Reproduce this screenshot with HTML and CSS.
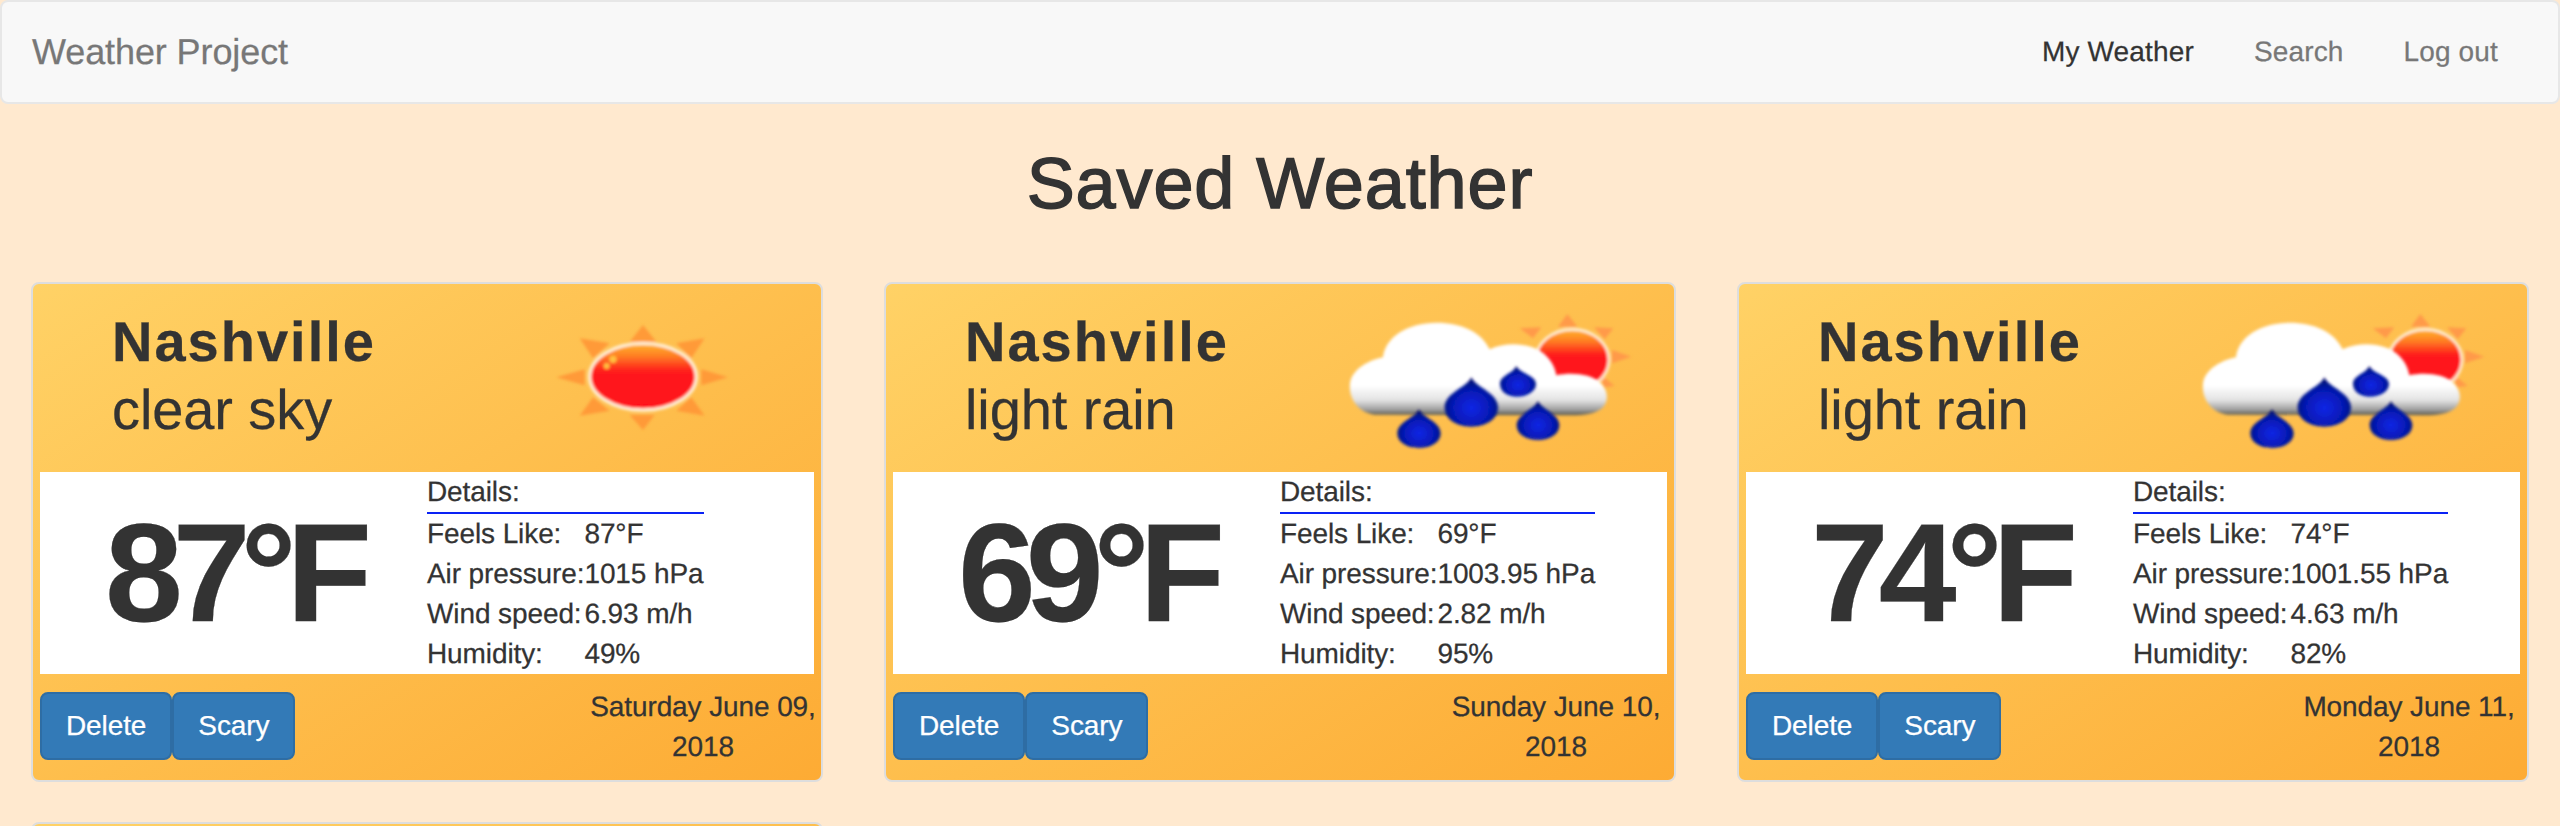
FILE: index.html
```html
<!DOCTYPE html>
<html lang="en">
<head>
<meta charset="utf-8">
<title>Weather Project</title>
<link rel="stylesheet" href="styles.css">
</head>
<body>
<svg class="defs" width="0" height="0" aria-hidden="true">
  <defs>
    <filter id="soft" x="-10%" y="-10%" width="120%" height="120%"><feGaussianBlur stdDeviation="4.5"/></filter>
    <linearGradient id="sunFill" x1="0" y1="0" x2="0" y2="1">
      <stop offset="0" stop-color="#ffb62e"/>
      <stop offset=".2" stop-color="#ff7a22"/>
      <stop offset=".42" stop-color="#ff1a1c"/>
      <stop offset="1" stop-color="#ff101a"/>
    </linearGradient>
    <linearGradient id="cloudFill" x1="0" y1="68" x2="0" y2="345" gradientUnits="userSpaceOnUse">
      <stop offset="0" stop-color="#ffffff"/>
      <stop offset=".68" stop-color="#ffffff"/>
      <stop offset=".84" stop-color="#e2e2e2"/>
      <stop offset=".94" stop-color="#a0a0a0"/>
      <stop offset="1" stop-color="#5a5a50"/>
    </linearGradient>
    <radialGradient id="dropFill" cx=".5" cy=".62" r=".6">
      <stop offset="0" stop-color="#0c26e6"/>
      <stop offset=".6" stop-color="#0619b4"/>
      <stop offset="1" stop-color="#020c66"/>
    </radialGradient>
    <symbol id="sun-icon" viewBox="0 0 900 480">
      <g transform="translate(129 0)" filter="url(#soft)">
        <g fill="#ff9a38">
          <polygon points="345,75 305,125 385,125"/>
          <polygon points="345,390 305,345 380,345"/>
          <polygon points="85,232 170,208 170,256"/>
          <polygon points="600,232 520,208 520,256"/>
          <polygon points="155,115 245,130 195,175"/>
          <polygon points="530,115 445,130 490,175"/>
          <polygon points="155,347 195,292 245,332"/>
          <polygon points="530,347 490,292 445,332"/>
        </g>
        <ellipse cx="345" cy="230" rx="160" ry="100" fill="url(#sunFill)" stroke="#fff0d8" stroke-width="10"/>
        <g fill="#ffc040">
          <circle cx="255" cy="178" r="11"/>
          <circle cx="236" cy="198" r="9"/>
        </g>
      </g>
    </symbol>
    <symbol id="rain-icon" viewBox="0 0 900 480">
      <g filter="url(#soft)">
        <g fill="#ff9a48">
          <polygon points="688,42 660,80 718,80"/>
          <polygon points="545,85 610,82 585,115"/>
          <polygon points="826,85 768,82 800,118"/>
          <polygon points="880,170 822,150 822,190"/>
          <polygon points="830,258 790,225 795,262"/>
        </g>
        <ellipse cx="703" cy="180" rx="110" ry="92" fill="url(#sunFill)" stroke="#fff0d8" stroke-width="8"/>
      </g>
      <path filter="url(#soft)" fill="url(#cloudFill)" d="M110 344 C60 338 32 295 36 252 C40 214 80 184 135 172 C142 110 210 68 295 68 C370 68 430 95 455 148 C510 122 590 130 625 168 C645 188 652 208 655 226 C700 216 760 222 785 247 C812 272 812 302 795 322 C775 342 740 346 700 346 Z"/>
      <g filter="url(#soft)" fill="url(#dropFill)">
        <path d="M400 232 C412 262 480 278 480 322 C480 360 442 380 400 380 C358 380 320 360 320 322 C320 278 388 262 400 232Z"/>
        <path d="M535 198 C545 220 594 226 594 252 C594 276 566 290 537 290 C508 290 486 276 486 252 C486 226 525 220 535 198Z"/>
        <path d="M243 328 C253 352 308 366 308 400 C308 428 277 444 243 444 C209 444 178 428 178 400 C178 366 233 352 243 328Z"/>
        <path d="M600 303 C610 327 664 343 664 375 C664 404 634 420 600 420 C566 420 536 404 536 375 C536 343 590 327 600 303Z"/>
      </g>
    </symbol>
  </defs>
</svg>

<nav class="navbar">
  <a class="brand" href="#">Weather Project</a>
  <ul class="nav-links">
    <li><a class="nav-link active" href="#">My Weather</a></li>
    <li><a class="nav-link" href="#">Search</a></li>
    <li><a class="nav-link" href="#">Log out</a></li>
  </ul>
</nav>

<h1 class="page-title">Saved Weather</h1>

<main class="cards">
  <article class="card">
    <header class="card-head">
      <div class="place">
        <div class="city">Nashville</div>
        <div class="sky">clear sky</div>
      </div>
      <svg class="weather-icon" role="img" aria-label="clear sky"><use href="#sun-icon"/></svg>
    </header>
    <section class="panel">
      <div class="temp">87°F</div>
      <table class="details">
        <tr><th colspan="2">Details:</th></tr>
        <tr><td>Feels Like:</td><td>87°F</td></tr>
        <tr><td>Air pressure:</td><td>1015 hPa</td></tr>
        <tr><td>Wind speed:</td><td>6.93 m/h</td></tr>
        <tr><td>Humidity:</td><td>49%</td></tr>
      </table>
    </section>
    <footer class="card-foot">
      <div class="actions"><button class="btn">Delete</button><button class="btn">Scary</button></div>
      <div class="date"><span class="date-line">Saturday June 09,</span><span class="date-line">2018</span></div>
    </footer>
  </article>

  <article class="card">
    <header class="card-head">
      <div class="place">
        <div class="city">Nashville</div>
        <div class="sky">light rain</div>
      </div>
      <svg class="weather-icon" role="img" aria-label="light rain"><use href="#rain-icon"/></svg>
    </header>
    <section class="panel">
      <div class="temp">69°F</div>
      <table class="details">
        <tr><th colspan="2">Details:</th></tr>
        <tr><td>Feels Like:</td><td>69°F</td></tr>
        <tr><td>Air pressure:</td><td>1003.95 hPa</td></tr>
        <tr><td>Wind speed:</td><td>2.82 m/h</td></tr>
        <tr><td>Humidity:</td><td>95%</td></tr>
      </table>
    </section>
    <footer class="card-foot">
      <div class="actions"><button class="btn">Delete</button><button class="btn">Scary</button></div>
      <div class="date"><span class="date-line">Sunday June 10,</span><span class="date-line">2018</span></div>
    </footer>
  </article>

  <article class="card">
    <header class="card-head">
      <div class="place">
        <div class="city">Nashville</div>
        <div class="sky">light rain</div>
      </div>
      <svg class="weather-icon" role="img" aria-label="light rain"><use href="#rain-icon"/></svg>
    </header>
    <section class="panel">
      <div class="temp">74°F</div>
      <table class="details">
        <tr><th colspan="2">Details:</th></tr>
        <tr><td>Feels Like:</td><td>74°F</td></tr>
        <tr><td>Air pressure:</td><td>1001.55 hPa</td></tr>
        <tr><td>Wind speed:</td><td>4.63 m/h</td></tr>
        <tr><td>Humidity:</td><td>82%</td></tr>
      </table>
    </section>
    <footer class="card-foot">
      <div class="actions"><button class="btn">Delete</button><button class="btn">Scary</button></div>
      <div class="date"><span class="date-line">Monday June 11,</span><span class="date-line">2018</span></div>
    </footer>
  </article>

  <article class="card card-next"></article>
</main>
</body>
</html>
```

FILE: styles.css
```css
* { box-sizing: border-box; }
html, body { height: 826px; overflow: hidden; }
body {
  margin: 0;
  background: #ffe9cf;
  color: #333;
  font-family: "Liberation Sans", Arial, sans-serif;
  font-size: 28px;
  line-height: 40px;
  letter-spacing: -.1px;
  text-rendering: geometricPrecision;
  -webkit-text-stroke: .25px currentColor;
}
.defs { display: block; height: 0; }

.navbar {
  display: flex;
  justify-content: space-between;
  align-items: center;
  height: 104px;
  padding: 0 30px 0 30px;
  background: #f8f8f8;
  border: 2px solid #e7e7e7;
  border-radius: 8px;
}
.brand { color: #777; font-size: 36px; text-decoration: none; }
.nav-links { display: flex; list-style: none; margin: 0; padding: 0; }
.nav-link { display: block; padding: 30px; color: #777; text-decoration: none; letter-spacing: .15px; }
.nav-link.active { color: #333; }

.page-title {
  margin: 40px 0 0;
  height: 138px;
  text-align: center;
  font-size: 72px;
  line-height: 80px;
  font-weight: 400;
  letter-spacing: .9px;
  -webkit-text-stroke: 1.5px #333;
}

.cards {
  display: grid;
  grid-template-columns: repeat(3, 792px);
  column-gap: 61px;
  row-gap: 40px;
  padding-left: 31px;
}
.card {
  height: 500px;
  border: 2px solid #ddd;
  border-radius: 8px;
  background: linear-gradient(to bottom right, #ffd266, #fdab34);
  background-origin: border-box;
}
.card-head {
  display: flex;
  justify-content: space-between;
  height: 188px;
  padding: 16px 36px 12px 79px;
}
.city { margin-top: 8px; font-size: 56px; line-height: 68px; font-weight: 700; letter-spacing: 2px; }
.sky { font-size: 56px; line-height: 68px; }
.weather-icon { display: block; width: 300px; height: 160px; }

.panel {
  display: grid;
  grid-template-columns: 387px 387px;
  height: 202px;
  margin: 0 7px;
  background: #fff;
}
.temp {
  align-self: center;
  text-align: center;
  font-size: 140px;
  line-height: 160px;
  font-weight: 700;
  letter-spacing: -10px;
}
.details { border-collapse: collapse; align-self: start; width: max-content; }
.details th, .details td { padding: 0; font-weight: 400; text-align: left; white-space: nowrap; }
.details th { border-bottom: 2px solid #0a22f5; }

.card-foot {
  display: flex;
  justify-content: space-between;
  align-items: flex-start;
  padding: 13px 5px 0 7px;
}
.actions { display: flex; margin-top: 5px; }
.btn {
  padding: 12px 24px;
  border: 2px solid #2e6da4;
  border-radius: 8px;
  background: #337ab7;
  color: #fff;
  font: inherit;
  letter-spacing: inherit;
}
.date { width: 226px; text-align: center; white-space: nowrap; }
.date-line { display: block; }

.card-next { grid-column: 1; }
```
